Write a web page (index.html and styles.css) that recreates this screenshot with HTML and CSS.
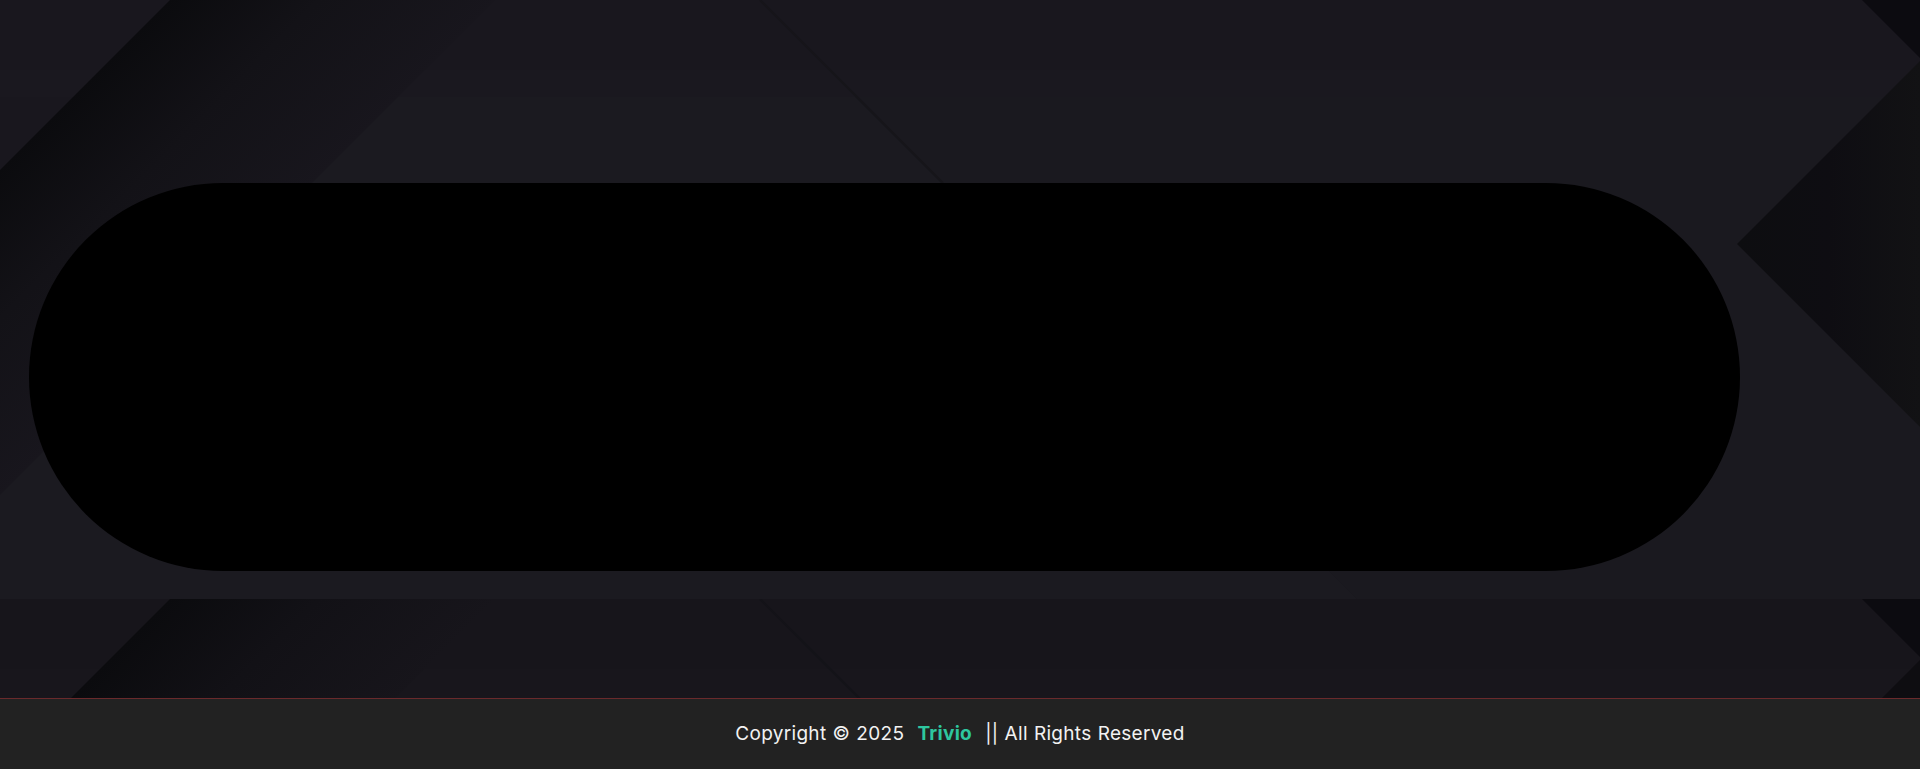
FILE: index.html
```html
<!DOCTYPE html>
<html lang="en">
<head>
<meta charset="utf-8">
<title>Trivio</title>
<link rel="stylesheet" href="styles.css">
</head>
<body>
<section class="hero">
  <svg class="bg-art" viewBox="0 0 1920 600" preserveAspectRatio="xMinYMin slice" aria-hidden="true">
    <defs>
      <linearGradient id="stripeA" gradientUnits="userSpaceOnUse" x1="85" y1="85" x2="250" y2="250">
        <stop offset="0" stop-color="#0b0b0e"/>
        <stop offset="0.45" stop-color="#131217"/>
        <stop offset="1" stop-color="#18161d"/>
      </linearGradient>
      <linearGradient id="chevA" gradientUnits="userSpaceOnUse" x1="1737" y1="0" x2="1920" y2="0">
        <stop offset="0" stop-color="#0d0d10"/>
        <stop offset="0.5" stop-color="#0e0d12"/>
        <stop offset="1" stop-color="#121214"/>
      </linearGradient>
    </defs>
    <rect x="0" y="0" width="1920" height="600" fill="#19171e"/>
    <rect x="0" y="70" width="1920" height="27" fill="#1a181f"/>
    <polygon points="330,97 855,97 1358,600 0,600 0,427" fill="#1b1a20"/>
    <polygon points="855,97 1920,97 1920,600 1358,600" fill="#1a191f"/>
    <polygon points="170,0 495,0 0,495 0,170" fill="url(#stripeA)"/>
    <line x1="760" y1="0" x2="943" y2="183" stroke="#16151a" stroke-width="2"/>
    <polygon points="1862,0 1920,0 1920,58" fill="#0c0b10"/>
    <polygon points="1920,61 1737,244 1920,427" fill="url(#chevA)"/>
  </svg>
  <div class="pill"></div>
</section>
<section class="band">
  <svg class="bg-art" viewBox="0 0 1920 600" preserveAspectRatio="xMinYMin slice" aria-hidden="true">
    <defs>
      <linearGradient id="stripeB" gradientUnits="userSpaceOnUse" x1="85" y1="85" x2="250" y2="250">
        <stop offset="0" stop-color="#0b0b0e"/>
        <stop offset="0.45" stop-color="#121116"/>
        <stop offset="1" stop-color="#17151b"/>
      </linearGradient>
    </defs>
    <rect x="0" y="0" width="1920" height="600" fill="#17151b"/>
    <rect x="0" y="70" width="1920" height="30" fill="#18161c"/>
    <polygon points="170,0 495,0 0,495 0,170" fill="url(#stripeB)"/>
    <line x1="760" y1="0" x2="860" y2="100" stroke="#141318" stroke-width="2"/>
    <polygon points="1862,0 1920,0 1920,58" fill="#0c0b10"/>
    <polygon points="1920,61 1737,244 1920,427" fill="#0e0d11"/>
  </svg>
</section>
<footer class="site-footer">
  <p class="copy">Copyright © 2025 <span class="brand">Trivio</span> || All Rights Reserved</p>
</footer>
</body>
</html>
```

FILE: styles.css
```css
* {
  box-sizing: border-box;
}

html, body {
  margin: 0;
  padding: 0;
  background: #19171e;
  overflow: hidden;
}

body {
  font-family: Inter, "Noto Sans", sans-serif;
}

.hero {
  position: relative;
  height: 599px;
  padding: 183px 0 0 29px;
  overflow: hidden;
}

.band {
  position: relative;
  height: 99px;
  overflow: hidden;
}

.bg-art {
  position: absolute;
  left: 0;
  top: 0;
  width: 100%;
  height: 100%;
  display: block;
  z-index: 0;
}

.pill {
  position: relative;
  z-index: 1;
  width: 1711px;
  height: 388px;
  background: #000;
  border-radius: 194px;
}

.site-footer {
  height: 71px;
  background: #222222;
  border-top: 1px solid #6a2a2c;
  display: flex;
  align-items: center;
  justify-content: center;
}

.copy {
  margin: 0;
  color: #f2f2f2;
  font-size: 19px;
  letter-spacing: 0.3px;
  word-spacing: 0.5px;
  line-height: 1;
  padding-bottom: 2px;
}

.brand {
  color: #2ec79f;
  font-weight: 700;
  margin: 0 7px;
}
```
